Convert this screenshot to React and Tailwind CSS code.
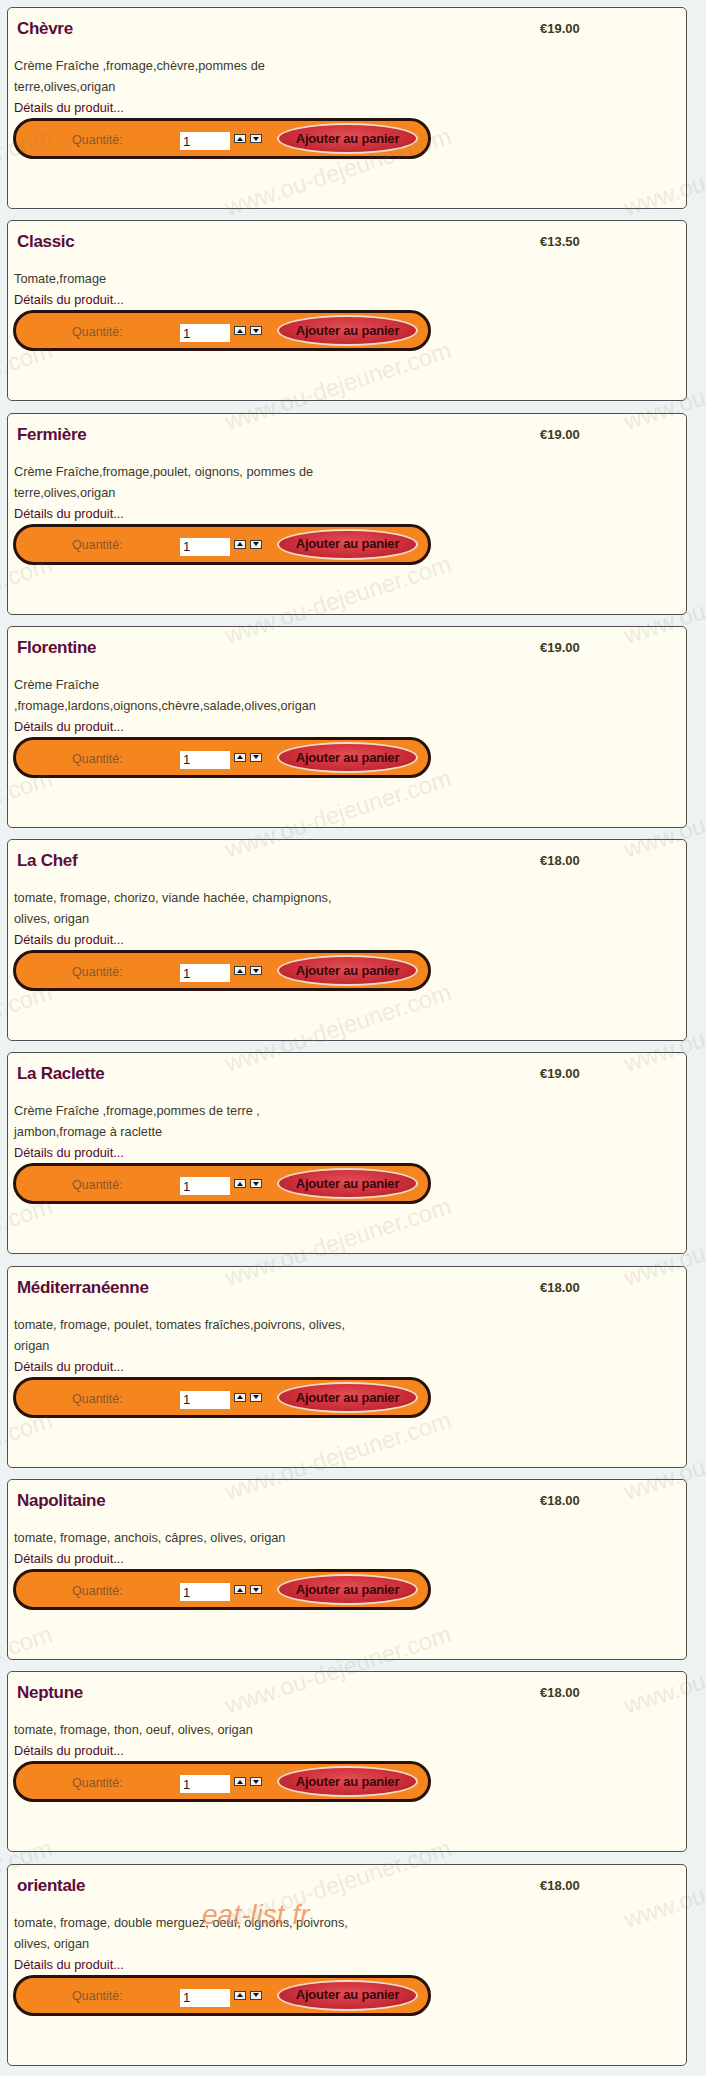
import React from "react";

const pizzas = [
  { name: "Chèvre", price: "€19.00", lines: ["Crème Fraîche ,fromage,chèvre,pommes de", "terre,olives,origan"] },
  { name: "Classic", price: "€13.50", lines: ["Tomate,fromage"] },
  { name: "Fermière", price: "€19.00", lines: ["Crème Fraîche,fromage,poulet, oignons, pommes de", "terre,olives,origan"] },
  { name: "Florentine", price: "€19.00", lines: ["Crème Fraîche", ",fromage,lardons,oignons,chèvre,salade,olives,origan"] },
  { name: "La Chef", price: "€18.00", lines: ["tomate, fromage, chorizo, viande hachée, champignons,", "olives, origan"] },
  { name: "La Raclette", price: "€19.00", lines: ["Crème Fraîche ,fromage,pommes de terre ,", "jambon,fromage à raclette"] },
  { name: "Méditerranéenne", price: "€18.00", lines: ["tomate, fromage, poulet, tomates fraîches,poivrons, olives,", "origan"] },
  { name: "Napolitaine", price: "€18.00", lines: ["tomate, fromage, anchois, câpres, olives, origan"] },
  { name: "Neptune", price: "€18.00", lines: ["tomate, fromage, thon, oeuf, olives, origan"] },
  { name: "orientale", price: "€18.00", lines: ["tomate, fromage, double merguez, oeuf, oignons, poivrons,", "olives, origan"] },
];

function Spinner({ up }) {
  return (
    <span className="flex h-[9px] w-[12px] items-center justify-center border border-[#3a3a3a] bg-[#f2f2f2]">
      <svg width="6" height="4" viewBox="0 0 6 4">
        {up ? <polygon points="3,0 6,4 0,4" fill="#111" /> : <polygon points="0,0 6,0 3,4" fill="#111" />}
      </svg>
    </span>
  );
}

function CartBar() {
  return (
    <div className="flex h-[41px] w-[418px] items-center rounded-full border-[3px] border-[#26120a] bg-[#f5861f] -ml-[1px]">
      <span className="ml-[56px] mt-[3px] w-[108px] text-[12.5px] leading-none text-[#8e5526]">Quantité:</span>
      <input
        type="text"
        defaultValue="1"
        className="mt-[5px] h-[18px] w-[50px] bg-white pl-[3px] text-[13px] leading-none text-[#222] outline-none"
      />
      <span className="ml-[4px] flex gap-[4px]">
        <Spinner up />
        <Spinner />
      </span>
      <button className="ml-[15px] flex h-[31px] w-[141px] items-center justify-center rounded-[50%] border-2 border-[#f4d9c6] bg-[radial-gradient(ellipse_at_50%_40%,#e24d55_0%,#cc2f3a_55%,#a81c28_100%)] text-[13px] font-bold tracking-[-0.2px] text-[#3a080c]">
        Ajouter au panier
      </button>
    </div>
  );
}

function PizzaCard({ pizza }) {
  return (
    <div className="grid grid-cols-[526px_1fr] rounded-[5px] border border-[#4f4f4f] bg-[#fffdef] pl-[6px] pt-[11px] pb-[49px]">
      <div>
        <h2 className="pl-[3px] text-[17px] font-bold leading-[20px] tracking-[-0.3px] text-[#5b0d3d]">{pizza.name}</h2>
        <div className="mt-[16px] text-[12.75px] leading-[21px] text-[#3a3a30]">
          {pizza.lines.map((l, i) => (
            <div key={i} className="whitespace-nowrap">{l}</div>
          ))}
          <div className="text-[#4d0b2c]">Détails du produit...</div>
        </div>
        <CartBar />
      </div>
      <div className="text-[13px] font-bold leading-[20px] text-[#3b3b26]">{pizza.price}</div>
    </div>
  );
}

export default function App() {
  const rows = Array.from({ length: 9 }, (_, k) => 172 + 214 * k);
  const cols = [-61, 338, 737];
  return (
    <div
      className="relative min-h-[2076px] overflow-hidden bg-[#edf3f3] pt-[7px]"
      style={{ fontFamily: '"Liberation Sans", Arial, sans-serif' }}
    >
      <div className="ml-[7px] flex w-[680px] flex-col gap-[11.3px]">
        {pizzas.map((p) => (
          <PizzaCard key={p.name} pizza={p} />
        ))}
      </div>

      {/* site watermark laid over the listing */}
      <div className="pointer-events-none absolute inset-0">
        {rows.map((y) =>
          cols.map((x) => (
            <span
              key={`${x}-${y}`}
              className="absolute w-[320px] text-center text-[24px] leading-[28px] text-[#7a7a66] opacity-[0.13]"
              style={{ left: x - 160, top: y - 14, transform: "rotate(-18deg)" }}
            >
              www.ou-dejeuner.com
            </span>
          ))
        )}
        <span className="absolute left-[202px] top-[1901px] text-[28px] italic leading-none text-[#ef8a5c] opacity-80">
          eat-list.fr
        </span>
      </div>
    </div>
  );
}
